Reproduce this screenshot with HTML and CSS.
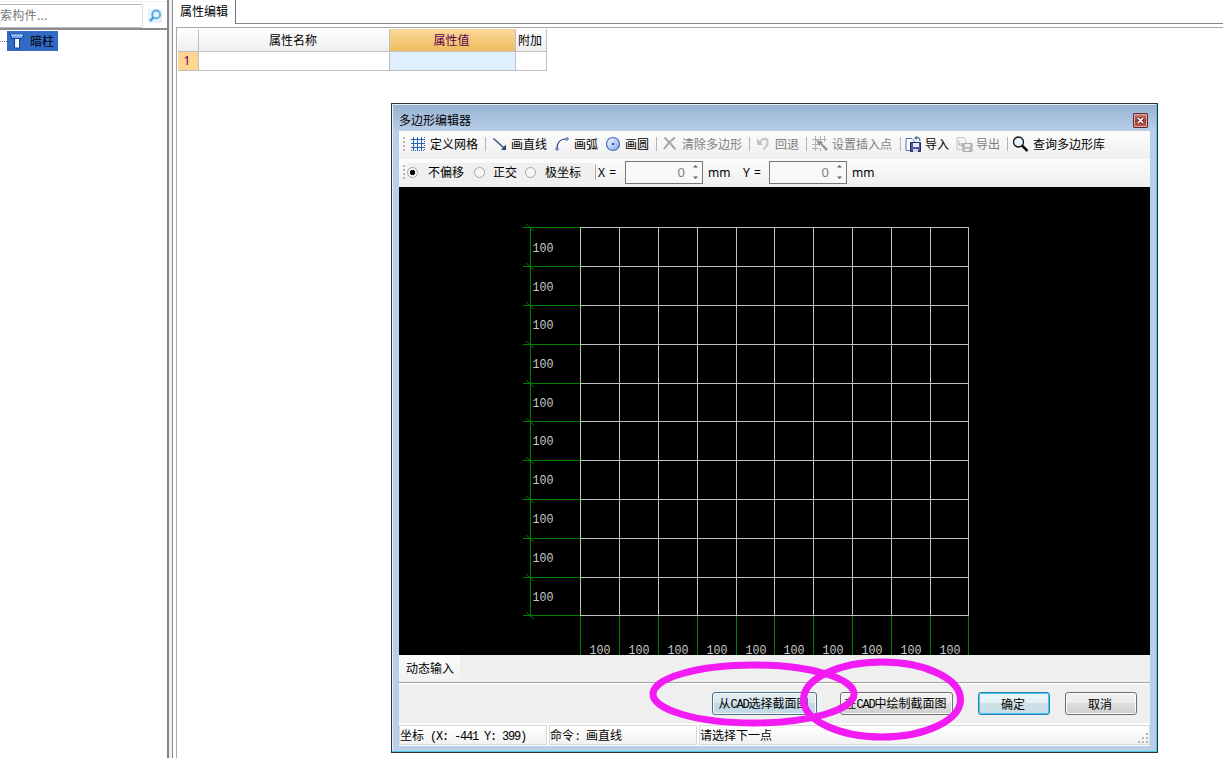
FILE: index.html
```
<!DOCTYPE html>
<html lang="zh-CN">
<head>
<meta charset="utf-8">
<title>多边形编辑器</title>
<link rel="stylesheet" href="styles.css">
</head>
<body>
<div class="app">
  <aside class="side">
    <div class="search"><div class="search-field">索构件...</div>
      <svg class="search-icon" width="14" height="14" viewBox="0 0 14 14"><rect width="14" height="14" fill="#e6f2fa"/><circle cx="8.2" cy="5.4" r="3.9" fill="#e4f4fd" stroke="#5aaee4" stroke-width="2"/><path d="M5.5 8.3 2 12" stroke="#4aa3df" stroke-width="2.6"/></svg>
    </div>
    <div class="tree"><i class="branch"></i><div class="node">
      <svg width="16" height="16" viewBox="0 0 16 16"><path d="M1 1.500h14l-2 4H3z" fill="#6fa8f5" stroke="#15408f"/><path d="M2 2h12" stroke="#d9ebff"/><path d="M5.500 5.500h5V15h-5z" fill="#fff" stroke="#15408f"/><path d="M7 6v8" stroke="#d0e3ff" stroke-width="1"/></svg><span>暗柱</span></div></div>
  </aside>
  <div class="splitter"></div>
  <main class="props">
    <div class="tabs"><div class="tab">属性编辑</div><div class="tab-rest"></div></div>
    <div class="sheet">
      <div class="table">
        <div class="th"></div><div class="th">属性名称</div><div class="th active">属性值</div><div class="th">附加</div>
        <div class="td rownum">1</div><div class="td"></div><div class="td current"></div><div class="td"></div>
      </div>
    </div>
  </main>
</div>

<div class="dialog">
  <div class="titlebar"><span>多边形编辑器</span><div class="close"><svg width="7" height="7" viewBox="0 0 7 7"><path d="M1 1l5 5M6 1 1 6" stroke="#5c2630" stroke-width="3.200"/><path d="M1 1l5 5M6 1 1 6" stroke="#fff" stroke-width="1.700"/></svg></div></div>
  <div class="toolbar tools">
    <i class="grip"></i>
    <svg width="16" height="16" viewBox="0 0 16 16"><path d="M3.500 1v14M7.500 1v14M11.500 1v14M1 3.500h14M1 7.500h14M1 11.500h14" stroke="#2c60b5" fill="none"/><path d="M14.500 1v14M1 14.500h14" stroke="#2c60b5" stroke-dasharray="1 1"/></svg>
    <span>定义网格</span><i class="sep"></i>
    <svg width="16" height="16" viewBox="0 0 16 16"><path d="M1 3l10 9" stroke="#244a70" stroke-width="1.300"/><path d="M13 14V8.500L8 14z" fill="#244a70"/><path d="M0 2h2v2H0z" fill="#6f8fc0"/></svg>
    <span>画直线</span>
    <svg width="16" height="16" viewBox="0 0 16 16"><path d="M2 13C2 7 5 3 11 3" fill="none" stroke="#263c8c" stroke-width="1.200"/><circle cx="2" cy="13" r="1.200" fill="#fff" stroke="#3855aa"/><circle cx="12" cy="3" r="1.200" fill="#fff" stroke="#3855aa"/></svg>
    <span>画弧</span>
    <svg width="16" height="16" viewBox="0 0 16 16"><defs><linearGradient id="disc" x2="1" y2="1"><stop stop-color="#fff"/><stop offset="1" stop-color="#7da6ee"/></linearGradient></defs><circle cx="8" cy="8" r="6.500" fill="url(#disc)" stroke="#4a68bd" stroke-width="1.200"/><path d="M7 7h2v2H7z" fill="#2d4ca6"/></svg>
    <span>画圆</span><i class="sep"></i>
    <svg width="16" height="16" viewBox="0 0 16 16"><path d="M1.500 1.500C5 5 9 9 12.500 13.500M12 1.500C7 5 4 9 1 13" stroke="#a5a5a5" stroke-width="2" fill="none"/></svg>
    <span class="off">清除多边形</span><i class="sep"></i>
    <svg width="16" height="16" viewBox="0 0 16 16"><path d="M4 6C8 1 12 2.500 11.500 7c-.2 3-2 4.500-4 6" fill="none" stroke="#c6c6c6" stroke-width="2.200"/><path d="M1 2v7h6z" fill="#c2c2c2"/></svg>
    <span class="off">回退</span><i class="sep"></i>
    <svg width="16" height="16" viewBox="0 0 16 16"><path d="M3.500 0v15M8.500 0v6M12.500 0v6M0 3.500h15M0 8.500h6M0 12.500h7M8.500 12v3" stroke="#b2b2b2" fill="none"/><path d="M4 4l3 6 1.500-1.500L14 15l2-2-6-5.500L11 6z" fill="#949494"/></svg>
    <span class="off">设置插入点</span><i class="sep"></i>
    <svg width="17" height="17" viewBox="0 0 17 17"><path d="M1 2.500h6l2 2v10H1z" fill="#fff" stroke="#4976b7"/><path d="M5.500 6.500h10v9h-10z" fill="#5555a8" stroke="#29295f"/><path d="M8 7h6v4H8z" fill="#e4e9ff"/><path d="M8 13h5v3H8z" fill="#d2d3e4"/><path d="M15 5C15 1 12 1 10 2" fill="none" stroke="#4b6a96" stroke-width="1.200"/><path d="M12 0v4L9 2z" fill="#4b6a96"/></svg>
    <span>导入</span>
    <svg width="17" height="17" viewBox="0 0 17 17"><path d="M1 1.500h7l2 2v10H1z" fill="#f4f4f4" stroke="#c4c4c4"/><path d="M7 7.500h9v8H7z" fill="#bdbdbd" stroke="#aaa"/><path d="M9 8h5v3H9zM9 13h4v2H9z" fill="#eee"/><path d="M3 5v4h4M5 7l2 2-2 2" fill="none" stroke="#aaa"/></svg>
    <span class="off">导出</span><i class="sep"></i>
    <svg width="17" height="17" viewBox="0 0 17 17"><circle cx="6.500" cy="6" r="5" fill="#e2f4fd" stroke="#111" stroke-width="1.300"/><path d="M10 9.500l5.500 5.500" stroke="#111" stroke-width="2.500"/></svg>
    <span>查询多边形库</span>
  </div>
  <div class="toolbar offsets">
    <i class="grip"></i>
    <div class="modes"><i class="radio on"></i><span>不偏移</span><i class="radio"></i><span>正交</span><i class="radio"></i><span>极坐标</span></div>
    <i class="sep"></i><span class="latin">X =</span>
    <div class="spin"><span>0</span><svg width="7" height="18" viewBox="0 0 7 18"><path d="M1 4.500 3.500 2 6 4.500zM1 13.500 3.500 16 6 13.500z" fill="#606060"/></svg></div>
    <span class="latin unit">mm</span><span class="latin">Y =</span>
    <div class="spin"><span>0</span><svg width="7" height="18" viewBox="0 0 7 18"><path d="M1 4.500 3.500 2 6 4.500zM1 13.500 3.500 16 6 13.500z" fill="#606060"/></svg></div>
    <span class="latin unit">mm</span>
  </div>
  <svg class="canvas" id="canvas" width="751" height="468" viewBox="399 187 751 468"></svg>
  <div class="input-tabs"><div class="input-tab">动态输入</div></div>
  <div class="actions">
    <button class="btn pick hot">从<span class="mono">CAD</span>选择截面图</button>
    <button class="btn draw">在<span class="mono">CAD</span>中绘制截面图</button>
    <button class="btn primary">确定</button>
    <button class="btn">取消</button>
  </div>
  <div class="status">
    <div class="cell">坐标<span class="mono coords"> (X: -441 Y: 399)</span></div><div class="cell">命令<span class="colon">:</span>画直线</div>
    <div class="cell last">请选择下一点<svg width="11" height="11" viewBox="0 0 11 11"><path d="M8 0h2v2H8zM4 4h2v2H4zM8 4h2v2H8zM0 8h2v2H0zM4 8h2v2H4zM8 8h2v2H8z" fill="#b5b5b5"/></svg></div>
  </div>
</div>

<svg class="marks" width="1223" height="758" viewBox="0 0 1223 758"><g fill="none" stroke="#f31bf3" stroke-width="7"><ellipse cx="753.500" cy="694" rx="100.500" ry="29"/><ellipse cx="882" cy="699.500" rx="78.500" ry="37.500"/></g></svg>
<script src="grid.js"></script>
</body>
</html>
```
FILE: styles.css
```
* { box-sizing: border-box; }
body { margin: 0; width: 1223px; height: 758px; overflow: hidden; background: #fff; position: relative;
  font: 12px/16px "Noto Sans CJK SC", sans-serif; color: #000; }
svg { display: block; flex: none; }
span { white-space: nowrap; }
.app { display: flex; height: 758px; }

.side { width: 169px; border-right: 2px solid #85858b; padding-top: 1px; background: #fff; }
.search { height: 29px; border-bottom: 2px solid #8c8c8c; border-top: 1px solid #f0f0f0; display: flex; align-items: center; padding-top: 2px; }
.search-field { width: 143px; height: 24px; border: 1px solid #b4bac0; border-left: 0; border-right-color: #d5dfe8; border-radius: 0 2px 2px 0; color: #777; line-height: 19px; letter-spacing: .3px; }
.search-icon { margin-left: 5px; }
.tree { display: flex; align-items: center; padding-top: 1px; }
.branch { width: 7px; border-top: 1px dotted #777; }
.node { width: 51px; height: 20px; background: #316ac5; display: flex; align-items: center; padding-left: 2px; }
.node span { margin-left: 5px; }
.splitter { width: 4px; background: #f0f0f0; border-right: 1px solid #8b8b93; }
.props { flex: 1; display: flex; flex-direction: column; }
.tabs { display: flex; height: 24px; }
.tab { width: 63px; padding: 3px 0 0 7px; border-right: 1px solid #77777f; }
.tab-rest { flex: 1; border-bottom: 1px solid #85858e; }
.sheet { flex: 1; margin: 3px 0 0 3px; border: solid #a8a8a8; border-width: 1px 0 0 1px; padding: 1px 0 0 1px; }
.table { width: 369px; display: grid; grid-template-columns: 21px 191px 126px 31px; grid-template-rows: 23px 19px; }
.th, .td { border-right: 1px solid #c0c0c0; border-bottom: 1px solid #c0c0c0; text-align: center; line-height: 22px; padding-right: 2px; }
.th { background: linear-gradient(#fff, #eee); }
.th.active { background: linear-gradient(#fad79b, #efbd5e); color: #5a0050; }
.td { line-height: 18px; }
.rownum { background: #ffd591; color: #5a0050; font-family: "Noto Sans", sans-serif; font-size: 12px; }
.current { background: #dfeffe; }

.dialog { position: absolute; left: 391px; top: 103px; width: 767px; height: 650px; border: 1px solid #303238;
  box-shadow: inset -1px -1px #48c8e8, inset 1px 1px #e7f0f8; background: linear-gradient(#97b2d1, #b9cfe8 28px, #b9cfe8); padding: 0 7px; }
.titlebar { height: 27px; display: flex; justify-content: space-between; padding-top: 8px; }
.close { width: 15px; height: 15px; border: 1px solid #5b2a34; border-radius: 1px; margin-right: 2px; margin-top: 1px; box-shadow: inset 0 0 0 1px #dda89f;
  background: linear-gradient(#c98478, #a83e30 50%, #b65a4a); display: flex; align-items: center; justify-content: center; }
.toolbar { height: 28px; background: linear-gradient(#fcfcfc, #efefef); align-items: center; padding-bottom: 2px; }
.tools { display: grid; grid-template-columns: 11px 20px 55px 8px 18px 44px 19px 31px 20px 31px 7px 19px 67px 7px 19px 31px 6px 20px 68px 5px 20px 31px 20px 31px 5px 21px 1fr; }
.off { color: #808080; }
.sep { width: 1px; height: 14px; background: #b4b4b4; }
.grip { width: 2px; height: 14px; margin-left: 4px; background: repeating-linear-gradient(#b5b5b5 0 2px, transparent 2px 4px); }
.offsets { display: flex; }
.modes { width: 187px; height: 19px; margin-left: 2px; background: #efefef; display: grid; align-items: center; grid-template-columns: 21px 46px 19px 32px 20px 1fr; }
.radio { width: 11px; height: 11px; margin-left: 0; border: 1px solid #a6a6a6; border-radius: 50%; background: #f6f6f6; }
.radio.on { background: radial-gradient(circle, #000 0 2.400px, #f6f6f6 3px); }
.offsets .sep { margin-left: 1px; margin-right: 2px; height: 16px; background: #aaa; }
.latin { font-family: "Noto Sans", sans-serif; font-size: 12px; width: 27px; letter-spacing: .5px; padding-top: 1px; }
.spin { width: 78px; height: 23px; border: 1px solid #777; background: #f8f8f8; display: flex; align-items: center; justify-content: flex-end; color: #808080;
  font-family: "Noto Sans", sans-serif; font-size: 13px; padding-right: 3px; }
.spin span { margin-right: 7px; }
.latin.unit { margin-left: 5px; width: 35px; letter-spacing: 0; }
.unit + .latin { width: 26px; }
.canvas { background: #000; }
.label { font-family: "Liberation Mono", monospace; font-size: 13px; fill: #c8c8c8; }
.input-tabs { height: 28px; background: #efefef; border-bottom: 1px solid #a0a0a0; }
.input-tab { width: 61px; height: 25px; padding: 5px 7px; background: linear-gradient(#fbfbfb, #f2f2f2); white-space: nowrap; }
.actions { height: 41px; background: #efefef; border-top: 1px solid #fff; border-bottom: 1px solid #fff; display: flex; justify-content: flex-end; padding: 8px 13px 0 0; }
.btn { width: 72px; height: 23px; padding: 0 2px 1px 0; margin-left: 15px; border: 1px solid #707070; border-radius: 3px; font: inherit; line-height: 19px; color: #000; white-space: nowrap;
  background: linear-gradient(#f2f2f2, #ebebeb 50%, #ddd 50%, #cfcfcf); box-shadow: inset 0 0 0 1px #fafafa; }
.pick { width: 105px; }
.draw { width: 113px; margin-left: 23px; }
.hot { border-color: #4d7188; background: linear-gradient(#e4eef3, #d7e6ed 50%, #c2d8e3 50%, #c5dbe7); }
.primary { margin-left: 25px; border-color: #2c7fae; background: linear-gradient(#eef7fa, #e2eff4 50%, #cee1e9 50%, #c9dee8); box-shadow: inset 0 0 0 1px #46c8f4; }
.mono { font-family: "Liberation Mono", monospace; font-size: 12px; letter-spacing: -1.200px; white-space: pre; }
.coords { letter-spacing: -1.200px; }
.colon { display: inline-block; width: 12px; padding-left: 2px; }
.status { height: 22px; background: #fff; padding-top: 1px; display: flex; gap: 2px; }
.cell { width: 148px; height: 20px; padding-left: 0; line-height: 18px; border: 1px solid #d8d8d8; background: linear-gradient(#fff, #f1f1f1); white-space: nowrap; }
.last { flex: 1; display: flex; justify-content: space-between; }
.last svg { align-self: flex-end; }
.marks { position: absolute; left: 0; top: 0; pointer-events: none; }
```
FILE: grid.js
```
const xs = [580, 619, 658, 697, 736, 774, 813, 852, 891, 930, 968];
const ys = [227, 266, 305, 344, 383, 421, 460, 499, 538, 577, 615];
const line = (x1, y1, x2, y2, color) =>
  `<path d="M${x1} ${y1}L${x2} ${y2}" stroke="${color}" fill="none"/>`;
const label = (x, y) =>
  `<text class="label" x="${x}" y="${y}" textLength="21" lengthAdjust="spacingAndGlyphs">100</text>`;
let out = line(530.5, 227, 530.5, 616, '#008000');
ys.forEach((y, i) => {
  out += line(523, y + .5, 580, y + .5, '#008000');
  out += line(526, y - 3, 534, y + 4, '#008000');
  if (i < 10) out += label(532.5, y + (i < 2 ? 25 : 24));
});
xs.forEach((x, i) => {
  out += line(x + .5, 616, x + .5, 655, '#008000');
  if (i < 10) out += label(x + 9.5, 654);
});
ys.forEach(y => { out += line(580, y + .5, 969, y + .5, '#c0c0c0'); });
xs.forEach(x => { out += line(x + .5, 227, x + .5, 616, '#c0c0c0'); });
document.getElementById('canvas').innerHTML = out;
```
